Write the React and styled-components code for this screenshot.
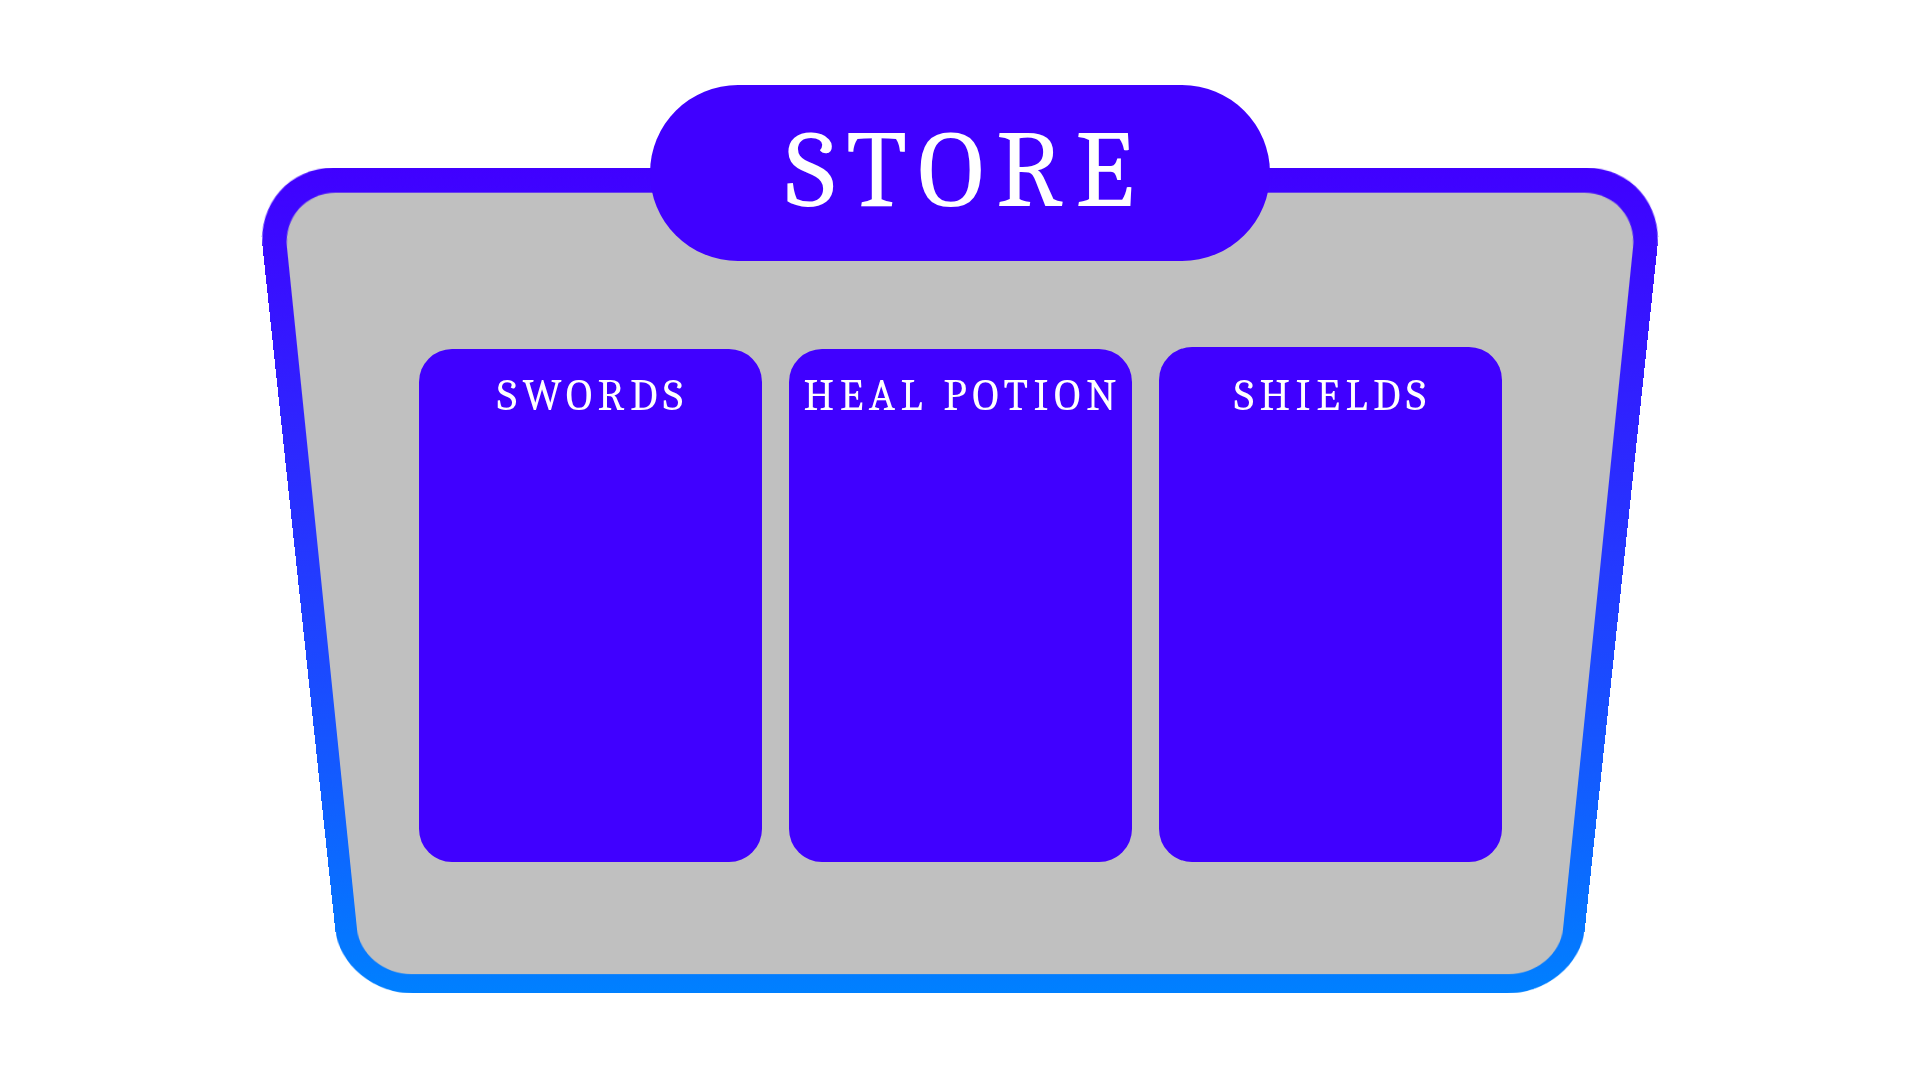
import React from "react";
import styled, { createGlobalStyle } from "styled-components";

const GlobalStyle = createGlobalStyle`
  html, body {
    margin: 0;
    padding: 0;
    background: #ffffff;
  }
  * {
    box-sizing: border-box;
  }
`;

const Page = styled.div`
  width: 1920px;
  min-height: 1080px;
  display: flex;
  flex-direction: column;
  align-items: center;
  padding-top: 85px;
  overflow: hidden;
  font-family: "Caladea", "Liberation Serif", serif;
`;

const Banner = styled.header`
  position: relative;
  z-index: 2;
  width: 620px;
  height: 176px;
  border-radius: 88px;
  background: #4000ff;
  display: flex;
  align-items: center;
  justify-content: center;
`;

const StoreTitle = styled.h1`
  margin: 0 0 4px;
  padding-left: 12px;
  font-family: "Caladea", "Liberation Serif", serif;
  font-size: 110px;
  font-weight: 400;
  line-height: 1;
  letter-spacing: 12px;
  color: #ffffff;
`;

const Frame = styled.main`
  position: relative;
  width: 1318px;
  height: 864px;
  margin-top: -85px;
  padding-top: 171px;
  display: flex;
  justify-content: center;
  align-items: flex-start;

  &::before {
    content: "";
    position: absolute;
    inset: 0;
    border: 23px solid transparent;
    border-radius: 74px 74px 76px 76px;
    background:
      linear-gradient(#c0c0c0, #c0c0c0) padding-box,
      linear-gradient(to bottom, #4000ff 0%, #0080ff 100%) border-box;
    transform: perspective(2000px) rotateX(-17.9deg);
  }
`;

const CardRow = styled.section`
  position: relative;
  display: flex;
  align-items: flex-end;
  gap: 27px;
`;

const Card = styled.article`
  width: 343px;
  height: ${(p) => p.$height}px;
  border-radius: 33px;
  background: #4000ff;
  display: flex;
  flex-direction: column;
  align-items: center;
  padding-top: ${(p) => p.$pad}px;
`;

const CardTitle = styled.h2`
  margin: 0;
  padding-left: 5.5px;
  font-family: "Caladea", "Liberation Serif", serif;
  font-size: 44px;
  font-weight: 400;
  line-height: 1;
  letter-spacing: 5.5px;
  color: #ffffff;
  white-space: nowrap;
`;

const cards = [
  { title: "SWORDS", height: 513, pad: 25 },
  { title: "HEAL POTION", height: 513, pad: 25 },
  { title: "SHIELDS", height: 515, pad: 27 },
];

export default function App() {
  return (
    <>
      <GlobalStyle />
      <Page>
        <Banner>
          <StoreTitle>STORE</StoreTitle>
        </Banner>
        <Frame>
          <CardRow>
            {cards.map((c) => (
              <Card key={c.title} $height={c.height} $pad={c.pad}>
                <CardTitle>{c.title}</CardTitle>
              </Card>
            ))}
          </CardRow>
        </Frame>
      </Page>
    </>
  );
}
